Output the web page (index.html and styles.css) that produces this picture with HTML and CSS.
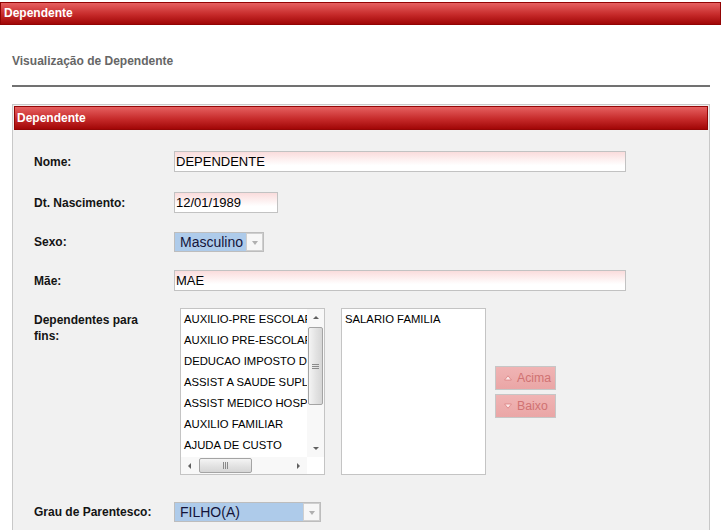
FILE: index.html
```html
<!DOCTYPE html>
<html lang="pt">
<head>
<meta charset="utf-8">
<title>Dependente</title>
<link rel="stylesheet" href="styles.css">
</head>
<body>
<div class="topbar">Dependente</div>
<div class="page">
  <h1 class="title">Visualização de Dependente</h1>
  <div class="rule"></div>
  <div class="panel">
    <div class="panel-head">Dependente</div>
    <div class="form">
      <div class="row r-nome">
        <div class="lbl">Nome:</div>
        <div class="field w-long">DEPENDENTE</div>
      </div>
      <div class="row r-dt">
        <div class="lbl">Dt. Nascimento:</div>
        <div class="field w-date">12/01/1989</div>
      </div>
      <div class="row r-sexo">
        <div class="lbl">Sexo:</div>
        <div class="select w-sexo"><span class="sel-text">Masculino</span><span class="sel-arrow"><span class="tri-down"></span></span></div>
      </div>
      <div class="row r-mae">
        <div class="lbl">Mãe:</div>
        <div class="field w-long">MAE</div>
      </div>
      <div class="row r-dep">
        <div class="lbl lbl-wrap">Dependentes para fins:</div>
        <div class="dep-controls">
          <div class="listbox lb-scroll">
            <div class="lb-items">
              <div class="lb-item">AUXILIO-PRE ESCOLAR</div>
              <div class="lb-item">AUXILIO PRE-ESCOLAR</div>
              <div class="lb-item">DEDUCAO IMPOSTO DE RENDA</div>
              <div class="lb-item">ASSIST A SAUDE SUPLEMENTAR</div>
              <div class="lb-item">ASSIST MEDICO HOSPITALAR</div>
              <div class="lb-item">AUXILIO FAMILIAR</div>
              <div class="lb-item">AJUDA DE CUSTO</div>
            </div>
            <div class="vscroll">
              <div class="sb-btn"><span class="arr arr-up"></span></div>
              <div class="vthumb">
                <svg width="7" height="5" viewBox="0 0 7 5"><rect x="0" y="0" width="7" height="1" fill="#8a8a8a"/><rect x="0" y="2" width="7" height="1" fill="#8a8a8a"/><rect x="0" y="4" width="7" height="1" fill="#8a8a8a"/></svg>
              </div>
              <div class="sb-fill"></div>
              <div class="sb-btn"><span class="arr arr-down"></span></div>
            </div>
            <div class="hscroll">
              <div class="sb-btn"><span class="arr arr-left"></span></div>
              <div class="hthumb">
                <svg width="5" height="7" viewBox="0 0 5 7"><rect x="0" y="0" width="1" height="7" fill="#8a8a8a"/><rect x="2" y="0" width="1" height="7" fill="#8a8a8a"/><rect x="4" y="0" width="1" height="7" fill="#8a8a8a"/></svg>
              </div>
              <div class="sb-fill"></div>
              <div class="sb-btn"><span class="arr arr-right"></span></div>
            </div>
            <div class="corner"></div>
          </div>
          <div class="listbox lb-plain">
            <div class="lb-item">SALARIO FAMILIA</div>
          </div>
          <div class="btn-col">
            <div class="btn"><svg class="btn-ico" width="8" height="6" viewBox="0 0 8 6"><polygon points="4,0.8 7.4,5 0.6,5" fill="#fdeaea" stroke="#d98080" stroke-width="0.8"/></svg><span>Acima</span></div>
            <div class="btn"><svg class="btn-ico" width="8" height="6" viewBox="0 0 8 6"><polygon points="0.6,1 7.4,1 4,5.2" fill="#fdeaea" stroke="#d98080" stroke-width="0.8"/></svg><span>Baixo</span></div>
          </div>
        </div>
      </div>
      <div class="row r-grau">
        <div class="lbl">Grau de Parentesco:</div>
        <div class="select w-grau"><span class="sel-text">FILHO(A)</span><span class="sel-arrow"><span class="tri-down"></span></span></div>
      </div>
    </div>
  </div>
</div>
</body>
</html>
```

FILE: styles.css
```css
* { box-sizing: border-box; }

html, body {
  margin: 0;
  padding: 0;
  background: #ffffff;
}

body {
  font-family: "Liberation Sans", Arial, sans-serif;
  padding-top: 2px;
  overflow: hidden;
  height: 530px;
}

.topbar {
  width: 721px;
  height: 23px;
  border: 1px solid #920404;
  background: linear-gradient(#e66060, #c62a2a 55%, #a10707);
  color: #ffffff;
  font-size: 12px;
  font-weight: bold;
  line-height: 21px;
  padding-left: 3px;
}

.page {
  padding-left: 12px;
}

.title {
  margin: 29px 0 0 0;
  font-size: 12px;
  line-height: 14px;
  font-weight: bold;
  color: #666666;
}

.rule {
  margin-top: 17px;
  width: 698px;
  height: 2px;
  background: #717171;
}

.panel {
  margin-top: 17px;
  width: 698px;
  height: 426px;
  border: 1px solid #c8c8c8;
  border-bottom: none;
  padding: 1px;
  background: #f1f1f1;
  overflow: hidden;
}

.panel-head {
  height: 24px;
  border: 1px solid #930606;
  background: linear-gradient(#e66060, #c62a2a 55%, #a10707);
  color: #ffffff;
  font-size: 12px;
  font-weight: bold;
  line-height: 22px;
  padding-left: 2px;
}

.form {
  padding: 21px 0 0 20px;
  display: flex;
  flex-direction: column;
}

.row {
  display: flex;
  align-items: center;
}

.r-dt { margin-top: 20px; }
.r-sexo { margin-top: 19px; }
.r-mae { margin-top: 18px; }
.r-dep { margin-top: 17px; align-items: flex-start; }
.r-grau { margin-top: 27px; }

.lbl {
  width: 140px;
  flex: none;
  font-size: 12px;
  font-weight: bold;
  color: #141414;
  line-height: 16px;
  white-space: nowrap;
}

.lbl-wrap {
  white-space: normal;
  padding-right: 15px;
  padding-top: 4px;
}

.field {
  height: 21px;
  border: 1px solid #c2c2c2;
  background: linear-gradient(#fadcdc, #ffffff 70%);
  font-size: 13px;
  line-height: 19px;
  padding-left: 1px;
  color: #000000;
}

.w-long { width: 452px; }
.w-date { width: 104px; }

.select {
  height: 20px;
  border: 1px solid #bdbdbd;
  background: #aecbea;
  display: flex;
  align-items: stretch;
}

.w-sexo { width: 90px; }
.w-grau { width: 147px; }

.sel-text {
  flex: 1;
  font-size: 14px;
  line-height: 18px;
  padding-left: 5px;
  color: #14143a;
  white-space: nowrap;
}

.sel-arrow {
  width: 17px;
  flex: none;
  background: #f7f7f7;
  border: 1px solid #cfcfcf;
  display: flex;
  align-items: center;
  justify-content: center;
}

.tri-down {
  width: 0;
  height: 0;
  border-left: 3.5px solid transparent;
  border-right: 3.5px solid transparent;
  border-top: 4px solid #b0b0b0;
  margin-top: 1px;
}

.dep-controls {
  display: flex;
  align-items: center;
  margin-left: 6px;
}

.listbox {
  width: 145px;
  height: 167px;
  border: 1px solid #c4c4c4;
  background: #ffffff;
  flex: none;
}

.lb-scroll {
  display: grid;
  grid-template-columns: 126px 17px;
  grid-template-rows: 148px 17px;
}

.lb-plain {
  margin-left: 16px;
}

.lb-items {
  overflow: hidden;
}

.lb-item {
  font-size: 11.3px;
  line-height: 21px;
  padding-left: 3px;
  white-space: nowrap;
  color: #000000;
}

.vscroll {
  background: #f8f8f8;
  display: flex;
  flex-direction: column;
}

.hscroll {
  background: #f8f8f8;
  display: flex;
  flex-direction: row;
}

.corner {
  background: #ffffff;
}

.sb-btn {
  width: 17px;
  height: 17px;
  flex: none;
  display: flex;
  align-items: center;
  justify-content: center;
}

.sb-fill {
  flex: 1;
}

.arr {
  width: 0;
  height: 0;
}

.arr-up {
  border-left: 3px solid transparent;
  border-right: 3px solid transparent;
  border-bottom: 3px solid #606060;
}

.arr-down {
  border-left: 3px solid transparent;
  border-right: 3px solid transparent;
  border-top: 3px solid #606060;
}

.arr-left {
  border-top: 3px solid transparent;
  border-bottom: 3px solid transparent;
  border-right: 3px solid #606060;
}

.arr-right {
  border-top: 3px solid transparent;
  border-bottom: 3px solid transparent;
  border-left: 3px solid #606060;
}

.vthumb {
  margin: 1px 1px 0 1px;
  height: 78px;
  border: 1px solid #a4a4a4;
  border-radius: 2px;
  background: linear-gradient(to right, #f4f4f4, #e2e2e2 55%, #d6d6d6);
  display: flex;
  align-items: center;
  justify-content: center;
}

.hthumb {
  margin: 1px 0 1px 1px;
  width: 53px;
  border: 1px solid #a4a4a4;
  border-radius: 2px;
  background: linear-gradient(#f4f4f4, #e2e2e2 55%, #d6d6d6);
  display: flex;
  align-items: center;
  justify-content: center;
}

.btn-col {
  margin-left: 9px;
  display: flex;
  flex-direction: column;
  gap: 4px;
}

.btn {
  width: 61px;
  height: 24px;
  border: 1px solid #c6c6c6;
  background: linear-gradient(#f0b4b4, #eaa6a6);
  display: flex;
  align-items: center;
  padding-left: 8px;
  gap: 5px;
  font-size: 12.3px;
  color: #d07272;
}

.btn-ico {
  flex: none;
}
```
